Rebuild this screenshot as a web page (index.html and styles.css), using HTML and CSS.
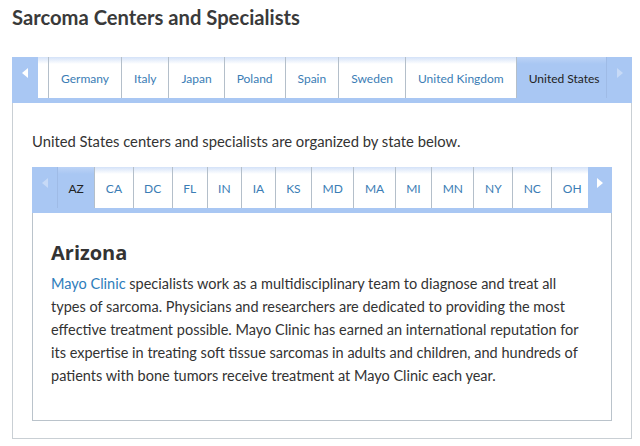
FILE: index.html
```html
<!DOCTYPE html>
<html>
<head>
<meta charset="utf-8">
<link rel="stylesheet" href="styles.css">
</head>
<body>
<h1 class="title">Sarcoma Centers and Specialists</h1>
<div class="box">
  <div class="tabbar">
    <div class="arrow"><svg width="6" height="10" viewBox="0 0 6 10"><path d="M6 0 L0 5 L6 10 Z" fill="#fff"/></svg></div>
    <div class="tabs">
      <div class="tab stub"></div>
      <div class="tab">Germany</div>
      <div class="tab">Italy</div>
      <div class="tab">Japan</div>
      <div class="tab">Poland</div>
      <div class="tab">Spain</div>
      <div class="tab">Sweden</div>
      <div class="tab">United Kingdom</div>
      <div class="tab active">United States</div>
    </div>
    <div class="arrow right"><svg width="6" height="10" viewBox="0 0 6 10"><path d="M0 0 L6 5 L0 10 Z" fill="#fff" fill-opacity="0.35"/></svg></div>
  </div>
  <div class="boxbody">
    <p class="intro">United States centers and specialists are organized by state below.</p>
    <div class="inner">
      <div class="tabbar small">
        <div class="arrow"><svg width="6" height="10" viewBox="0 0 6 10"><path d="M6 0 L0 5 L6 10 Z" fill="#fff" fill-opacity="0.35"/></svg></div>
        <div class="tabs">
          <div class="tab active first">AZ</div>
          <div class="tab">CA</div>
          <div class="tab">DC</div>
          <div class="tab">FL</div>
          <div class="tab">IN</div>
          <div class="tab">IA</div>
          <div class="tab">KS</div>
          <div class="tab">MD</div>
          <div class="tab">MA</div>
          <div class="tab">MI</div>
          <div class="tab">MN</div>
          <div class="tab">NY</div>
          <div class="tab">NC</div>
          <div class="tab">OH</div>
        </div>
        <div class="arrow right"><svg width="6" height="10" viewBox="0 0 6 10"><path d="M0 0 L6 5 L0 10 Z" fill="#fff"/></svg></div>
      </div>
      <div class="content">
        <h2 class="state">Arizona</h2>
        <p class="desc"><a class="link" href="#">Mayo Clinic</a> specialists work as a multidisciplinary team to diagnose and treat all types of sarcoma. Physicians and researchers are dedicated to providing the most effective treatment possible. Mayo Clinic has earned an international reputation for its expertise in treating soft tissue sarcomas in adults and children, and hundreds of patients with bone tumors receive treatment at Mayo Clinic each year.</p>
      </div>
    </div>
  </div>
</div>
</body>
</html>
```

FILE: styles.css
```css
html, body {
  margin: 0;
  padding: 0;
  background: #fff;
}
body {
  font-family: Lato, "Noto Sans", sans-serif;
  color: #333;
  width: 640px;
  height: 446px;
  overflow: hidden;
}
.title {
  margin: 0;
  padding: 4px 0 0 12px;
  height: 57px;
  box-sizing: border-box;
  font-size: 20.2px;
  line-height: 26px;
  font-weight: 700;
  color: #3a3a3a;
}
.box {
  margin-left: 12px;
  width: 620px;
  height: 382px;
  box-sizing: border-box;
  border: 1px solid #c9cfd4;
  border-top: none;
}
.tabbar {
  display: flex;
  height: 46px;
  background: #a9c7f3;
  margin: 0 -1px;
  box-sizing: border-box;
  padding-bottom: 5px;
  font-size: 12px;
}
.tabs {
  flex: 1;
  display: flex;
  overflow: hidden;
}
.arrow {
  width: 26px;
  flex: none;
  display: flex;
  justify-content: center;
  align-items: flex-start;
  padding-top: 11px;
  box-sizing: border-box;
}
.arrow.right {
  border-left: 1px solid #9fbbe6;
}
.tab {
  flex: none;
  display: flex;
  align-items: center;
  padding: 2px 12px 0;
  border-left: 1px solid #b4bfca;
  background: linear-gradient(#d4e2f8, #fff 7px);
  color: #3b7db5;
  white-space: nowrap;
}
.tab.stub {
  width: 10px;
  padding: 0;
  border-left: none;
  border-right: 1px solid #b4bfca;
}
.tab.stub + .tab {
  border-left: none;
}
.tab.active {
  background: linear-gradient(#bcd3f6, #a9c7f3 7px);
  color: #222;
}
.boxbody {
  padding: 28px 19px 0 19px;
}
.intro {
  margin: 0;
  font-size: 14.8px;
  line-height: 20px;
  color: #333;
}
.inner {
  margin-top: 16px;
  border: 1px solid #bac3cb;
  border-top: none;
  height: 254px;
  box-sizing: border-box;
}
.tabbar.small .arrow {
  width: 25px;
}
.tabbar.small .arrow.right {
  width: 24px;
  border-left: none;
}
.tabbar.small .tab {
  padding: 2px 10.5px 0;
}
.tabbar.small .tab.first {
  border-left: 1px solid #9fbbe6;
}
.content {
  padding: 27px 20px 0 18px;
}
.state {
  margin: 0;
  font-family: "Open Sans", Lato, sans-serif;
  font-size: 20px;
  line-height: 26px;
  font-weight: 700;
  color: #333;
}
.desc {
  margin: 6px 0 0;
  font-size: 14.5px;
  line-height: 23px;
  color: #333;
}
.link {
  color: #2e7dbb;
  text-decoration: none;
}
```
